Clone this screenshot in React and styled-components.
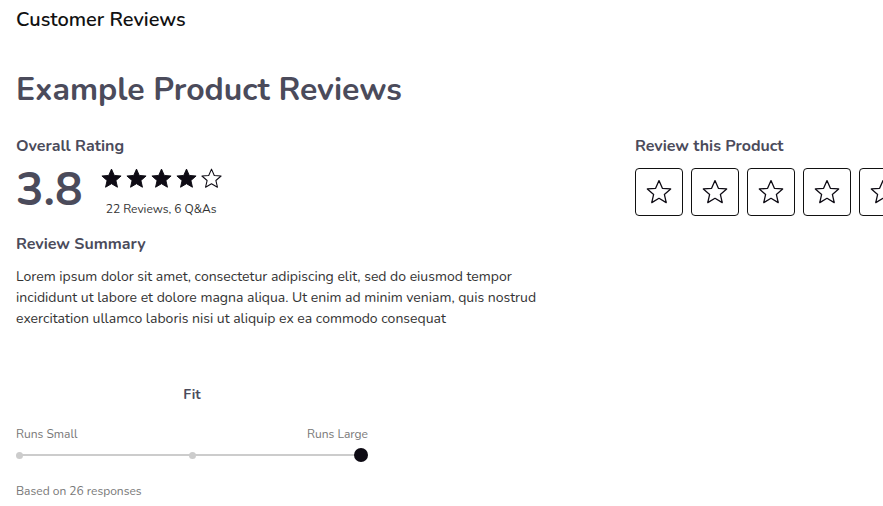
import styled, { createGlobalStyle } from "styled-components";

const GlobalStyle = createGlobalStyle`
  body {
    margin: 0;
    padding: 0 16px;
    font-family: "Nunito", Lato, "Noto Sans", sans-serif;
    color: #333;
    background: #fff;
    overflow-x: hidden;
  }
  * { box-sizing: border-box; }
`;

const PageTitle = styled.h1`
  margin: 0;
  padding-top: 8px;
  font-size: 20px;
  line-height: 23px;
  font-weight: 600;
  color: #111;
`;

const ProductTitle = styled.h2`
  margin: 39px 0 0;
  font-size: 32px;
  line-height: 40px;
  font-weight: 700;
  color: #4b4b5b;
`;

const Columns = styled.div`
  display: grid;
  grid-template-columns: 587px 1fr;
  column-gap: 32px;
  margin-top: 26px;
`;

const Column = styled.section`
  display: flex;
  flex-direction: column;
  min-width: 0;
`;

const Label = styled.h3`
  margin: ${(p) => (p.spaced ? "16px 0 0" : "0")};
  font-size: 16px;
  line-height: 20px;
  font-weight: 700;
  color: #4b4b5b;
`;

const RatingRow = styled.div`
  display: flex;
  align-items: flex-start;
  gap: 17px;
  margin-top: 6px;
`;

const BigScore = styled.div`
  font-size: 46px;
  line-height: 56px;
  font-weight: 700;
  color: #4b4b5b;
`;

const StarsBlock = styled.div`
  display: flex;
  flex-direction: column;
  align-items: center;
  padding-top: 5px;
`;

const StarList = styled.div`
  display: flex;
  gap: 2px;
`;

const Count = styled.span`
  margin-top: 11px;
  font-size: 12px;
  color: #333;
`;

const Summary = styled.p`
  margin: 12px 0 0;
  max-width: 540px;
  font-size: 14px;
  line-height: 21px;
  color: #333;
`;

const FitBox = styled.div`
  width: 352px;
  margin-top: 56px;
  display: flex;
  flex-direction: column;
`;

const FitTitle = styled.div`
  text-align: center;
  font-size: 14px;
  font-weight: 700;
  color: #4b4b5b;
`;

const FitLabels = styled.div`
  display: flex;
  justify-content: space-between;
  margin-top: 22px;
  font-size: 12px;
  color: #777;
`;

const Track = styled.div`
  position: relative;
  height: 14px;
  margin-top: 6px;
  display: flex;
  align-items: center;
  justify-content: space-between;
  &::before {
    content: "";
    position: absolute;
    left: 4px;
    right: 7px;
    top: 6px;
    height: 2px;
    background: #ccc;
  }
`;

const DotCell = styled.span`
  position: relative;
  width: 14px;
  display: flex;
  justify-content: ${(p) => p.align};
`;

const Dot = styled.span`
  display: block;
  width: ${(p) => (p.active ? "14px" : "7px")};
  height: ${(p) => (p.active ? "14px" : "7px")};
  border-radius: 50%;
  background: ${(p) => (p.active ? "#0e0b14" : "#ccc")};
`;

const Based = styled.div`
  margin-top: 21px;
  font-size: 12px;
  color: #777;
`;

const StarButtons = styled.div`
  display: flex;
  gap: 8px;
  margin-top: 12px;
`;

const StarButton = styled.button`
  flex: none;
  width: 48px;
  height: 48px;
  border: 1px solid #111;
  border-radius: 4px;
  background: #fff;
  display: flex;
  align-items: center;
  justify-content: center;
  padding: 0;
  cursor: pointer;
`;

const STAR =
  "M12 2.2l2.9 6.6 7.1.6-5.4 4.7 1.6 7-6.2-3.7-6.2 3.7 1.6-7L2 9.4l7.1-.6z";

function Star({ filled, size = 23 }) {
  return (
    <svg width={size} height={size} viewBox="0 0 24 24">
      <path
        d={STAR}
        fill={filled ? "#0e0b14" : "none"}
        stroke="#0e0b14"
        strokeWidth={filled ? 1 : 1.1}
        strokeLinejoin="round"
      />
    </svg>
  );
}

export default function App() {
  const rating = 3.8;
  const fitChoice = 2;
  return (
    <>
      <GlobalStyle />
      <PageTitle>Customer Reviews</PageTitle>
      <ProductTitle>Example Product Reviews</ProductTitle>
      <Columns>
        <Column>
          <Label>Overall Rating</Label>
          <RatingRow>
            <BigScore>{rating}</BigScore>
            <StarsBlock>
              <StarList>
                {[1, 2, 3, 4, 5].map((n) => (
                  <Star key={n} filled={n <= Math.round(rating)} />
                ))}
              </StarList>
              <Count>22 Reviews, 6 Q&amp;As</Count>
            </StarsBlock>
          </RatingRow>
          <Label spaced>Review Summary</Label>
          <Summary>
            Lorem ipsum dolor sit amet, consectetur adipiscing elit, sed do
            eiusmod tempor incididunt ut labore et dolore magna aliqua. Ut enim
            ad minim veniam, quis nostrud exercitation ullamco laboris nisi ut
            aliquip ex ea commodo consequat
          </Summary>
          <FitBox>
            <FitTitle>Fit</FitTitle>
            <FitLabels>
              <span>Runs Small</span>
              <span>Runs Large</span>
            </FitLabels>
            <Track>
              {["flex-start", "center", "flex-end"].map((align, i) => (
                <DotCell key={align} align={align}>
                  <Dot active={i === fitChoice} />
                </DotCell>
              ))}
            </Track>
            <Based>Based on 26 responses</Based>
          </FitBox>
        </Column>
        <Column>
          <Label>Review this Product</Label>
          <StarButtons>
            {[1, 2, 3, 4, 5].map((n) => (
              <StarButton key={n} aria-label={`${n} stars`}>
                <Star size={28} />
              </StarButton>
            ))}
          </StarButtons>
        </Column>
      </Columns>
    </>
  );
}
